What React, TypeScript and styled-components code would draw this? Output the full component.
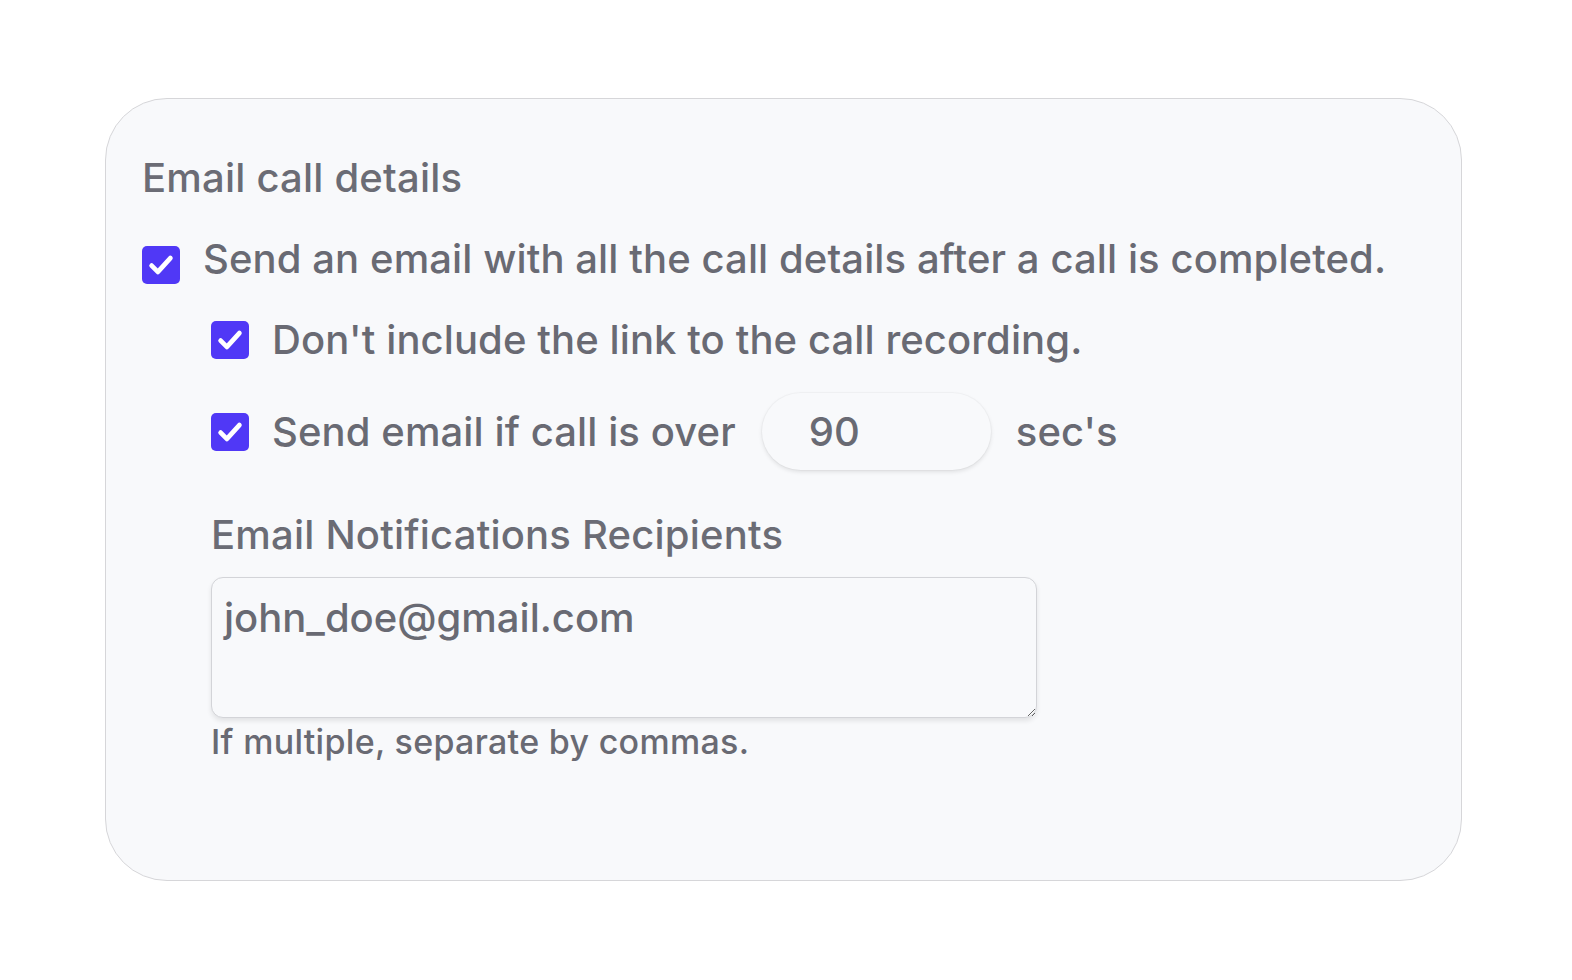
import styled, { createGlobalStyle } from "styled-components";

const GlobalStyle = createGlobalStyle`
  html, body {
    margin: 0;
    padding: 0;
    background: #ffffff;
  }
  body {
    font-family: Inter, "Noto Sans", "Liberation Sans", sans-serif;
    color: #696a73;
  }
`;

const Page = styled.div`
  width: 1572px;
  height: 980px;
  padding-top: 98px;
  box-sizing: border-box;
`;

const Card = styled.section`
  box-sizing: border-box;
  width: 1357px;
  height: 783px;
  margin-left: 105px;
  padding: 56px 0 0 36px;
  background: #f8f9fb;
  border: 1.5px solid #d6d6d9;
  border-radius: 62px;
`;

const Title = styled.h2`
  margin: 0;
  font-size: 40px;
  line-height: 46px;
  font-weight: 500;
  letter-spacing: 0.2px;
  color: #6b6c75;
`;

const Row = styled.label<{ indent?: number; top: number }>`
  display: flex;
  align-items: center;
  margin-top: ${(p) => p.top}px;
  margin-left: ${(p) => p.indent ?? 0}px;
  min-height: 46px;
  font-size: 40px;
  line-height: 46px;
  font-weight: 450;
  letter-spacing: 0.1px;
  cursor: pointer;
`;

const Box = styled.span<{ shift?: number }>`
  flex: none;
  width: 38px;
  height: 38px;
  border-radius: 5px;
  background: #5038f6;
  display: flex;
  align-items: center;
  justify-content: center;
  margin-right: 23px;
  transform: translateY(${(p) => p.shift ?? 0}px);

  svg {
    width: 30px;
    height: 30px;
  }
`;

const Seconds = styled.input`
  box-sizing: border-box;
  width: 229px;
  height: 77px;
  margin: 0 25px 0 26px;
  padding: 0 0 0 47px;
  border: none;
  border-radius: 40px;
  background: #f8f9fb;
  box-shadow: 0 2px 4px rgba(0, 0, 0, 0.1), 0 0 0 1px rgba(0, 0, 0, 0.025);
  font-family: inherit;
  font-size: 40px;
  font-weight: 450;
  color: #696a73;
  outline: none;
`;

const Recipients = styled.div`
  margin: 42px 0 0 69px;
`;

const FieldLabel = styled.div`
  font-size: 40px;
  line-height: 46px;
  font-weight: 500;
  letter-spacing: 0.2px;
  color: #6b6c75;
`;

const Area = styled.textarea`
  display: block;
  box-sizing: border-box;
  width: 826px;
  height: 141px;
  margin-top: 19px;
  padding: 17px 12px;
  border: 1.5px solid #d3d4d8;
  border-radius: 12px;
  background: #f8f9fb;
  box-shadow: 0 3px 5px rgba(0, 0, 0, 0.09);
  font-family: inherit;
  font-size: 40px;
  line-height: 46px;
  font-weight: 450;
  color: #696a73;
  outline: none;
`;

const Hint = styled.p`
  margin: 4px 0 0;
  font-size: 34px;
  line-height: 40px;
  font-weight: 450;
  letter-spacing: 0.3px;
  color: #696a73;
`;

const Check = () => (
  <svg viewBox="0 0 24 24" fill="none">
    <path
      d="M4.5 12.5l5 5L19.5 6.5"
      stroke="#fff"
      strokeWidth="3.8"
      strokeLinecap="round"
      strokeLinejoin="round"
    />
  </svg>
);

export default function App() {
  return (
    <Page>
      <GlobalStyle />
      <Card>
        <Title>Email call details</Title>
        <Row top={35}>
          <Box shift={6}>
            <Check />
          </Box>
          Send an email with all the call details after a call is completed.
        </Row>
        <Row top={35} indent={69}>
          <Box>
            <Check />
          </Box>
          Don't include the link to the call recording.
        </Row>
        <Row top={30} indent={69}>
          <Box>
            <Check />
          </Box>
          Send email if call is over
          <Seconds defaultValue="90" />
          sec's
        </Row>
        <Recipients>
          <FieldLabel>Email Notifications Recipients</FieldLabel>
          <Area defaultValue="john_doe@gmail.com" />
          <Hint>If multiple, separate by commas.</Hint>
        </Recipients>
      </Card>
    </Page>
  );
}
